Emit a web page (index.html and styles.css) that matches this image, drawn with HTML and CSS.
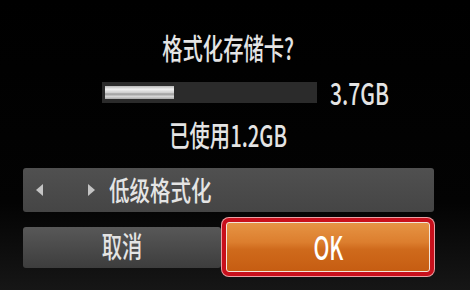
FILE: index.html
```html
<!DOCTYPE html>
<html lang="zh">
<head>
<meta charset="utf-8">
<title>格式化存储卡</title>
<link rel="stylesheet" href="styles.css">
</head>
<body>
<div class="screen">
  <div class="title"><span class="sx">格式化存储卡?</span></div>
  <div class="bar-row">
    <div class="bar"><div class="fill" style="width:33%"></div></div>
    <span class="cap sx left">3.7GB</span>
  </div>
  <div class="used"><span class="sx">已使用1.2GB</span></div>
  <div class="option">
    <span class="tri tri-left"></span>
    <span class="tri tri-right"></span>
    <span class="opt-text sx left">低级格式化</span>
  </div>
  <div class="buttons">
    <div class="btn cancel"><span class="sx">取消</span></div>
    <div class="ok-frame">
      <div class="ok"><span class="sx">OK</span></div>
    </div>
  </div>
</div>
</body>
</html>
```

FILE: styles.css
```css
html, body {
  margin: 0;
  padding: 0;
}
body {
  width: 470px;
  height: 290px;
  overflow: hidden;
  background: linear-gradient(#000 0%, #030303 70%, #161616 100%);
  color: #e4e4e4;
  font-family: "Noto Sans CJK SC", "DejaVu Sans", sans-serif;
  font-weight: 500;
}
.screen {
  padding: 33px 0 0 23px;
  width: 411px;
  display: flex;
  flex-direction: column;
}
.sx {
  display: inline-block;
  transform: scaleX(0.7);
  transform-origin: center;
  white-space: nowrap;
}
.sx.left {
  transform-origin: left center;
}
.title {
  height: 29px;
  line-height: 29px;
  font-size: 29px;
  text-align: center;
}
.bar-row {
  margin-top: 19px;
  height: 22px;
  display: flex;
  align-items: center;
  padding-left: 79px;
}
.bar {
  width: 215px;
  height: 21px;
  background: #2b2b2b;
  box-sizing: border-box;
  padding: 4px 3px;
  display: flex;
}
.fill {
  height: 13px;
  background: linear-gradient(#b8b8b8 0%, #f0f0f0 25%, #cfcfcf 50%, #9a9a9a 62%, #d6d6d6 80%, #a8a8a8 100%);
}
.cap {
  margin-left: 13px;
  font-size: 30px;
  line-height: 22px;
}
.used {
  margin-top: 17px;
  height: 29px;
  line-height: 29px;
  font-size: 29px;
  text-align: center;
}
.option {
  margin-top: 19px;
  height: 44px;
  border-radius: 3px;
  background: linear-gradient(#505050, #454545);
  display: flex;
  align-items: center;
  padding-left: 13px;
}
.tri {
  width: 0;
  height: 0;
  border-top: 6px solid transparent;
  border-bottom: 6px solid transparent;
}
.tri-left {
  border-right: 7px solid #c4c4c4;
}
.tri-right {
  margin-left: 45px;
  border-left: 7px solid #c4c4c4;
}
.opt-text {
  margin-left: 14px;
  font-size: 27px;
  line-height: 44px;
  transform: scaleX(0.76);
}
.buttons {
  margin-top: 5px;
  height: 60px;
  display: flex;
  align-items: center;
}
.btn {
  height: 41px;
  border-radius: 3px;
  display: flex;
  align-items: center;
  justify-content: center;
}
.cancel {
  width: 200px;
  background: linear-gradient(#585858, #3d3d3d);
  font-size: 29px;
  line-height: 41px;
  padding-bottom: 3px;
  box-sizing: border-box;
}
.ok-frame {
  margin-left: 1px;
  width: 214px;
  height: 58px;
  box-sizing: border-box;
  padding: 4px;
  border-radius: 7px;
  background: #c8101c;
  box-shadow: 0 0 0 1px #eaa0a4;
  display: flex;
}
.ok {
  flex: 1;
  border: 1px solid #f4e4d8;
  border-radius: 3px;
  background: linear-gradient(#e69444 0%, #dc7e2e 40%, #cf6a1c 55%, #c65d12 100%);
  display: flex;
  align-items: center;
  justify-content: center;
  color: #fff;
  font-size: 33px;
  line-height: 46px;
  padding-bottom: 3px;
}
.ok .sx {
  transform: scaleX(0.64);
}
```
